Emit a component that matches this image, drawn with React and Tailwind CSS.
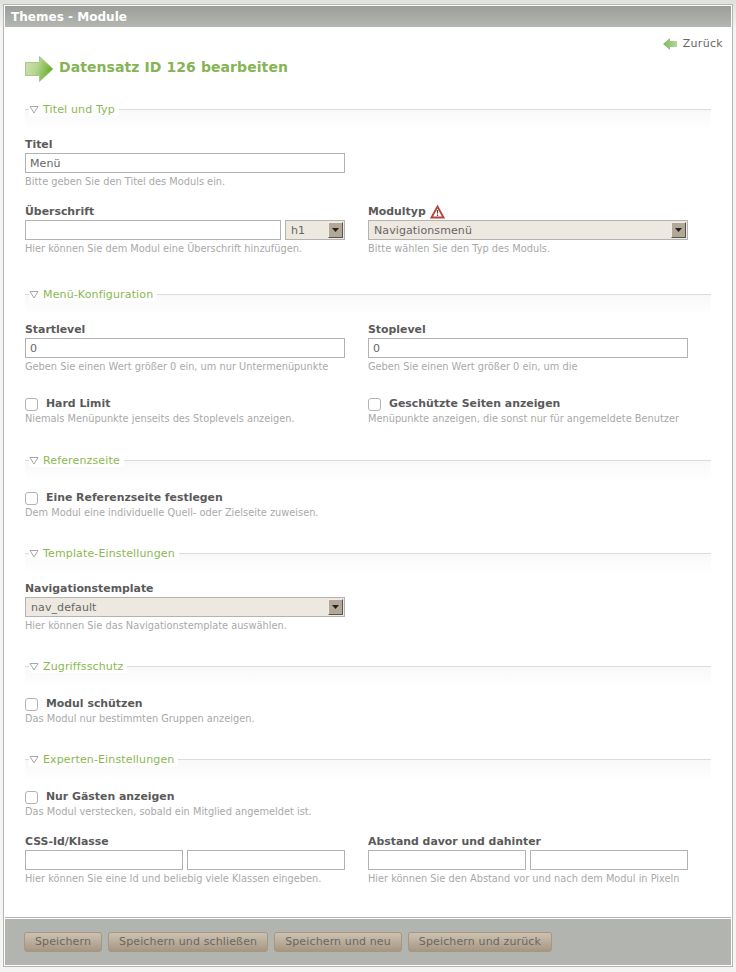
import React from "react";

const Legend = ({ title }) => (
  <div className="relative h-[29px]">
    <div className="absolute left-0 right-0 top-0 h-px bg-[#dcdcdc]" />
    <div className="h-[21px] bg-gradient-to-b from-[#f8f8f8] to-white" />
    <div className="absolute left-[4px] top-[-6px] flex h-[13px] items-center bg-white pr-[4px] text-[11px] leading-[13px] tracking-[0.14px] text-[#8ab84f]">
      <svg width="10" height="9" viewBox="0 0 10 9" className="mr-[4px]">
        <path d="M1 1.5 H9 L5 8 Z" fill="none" stroke="#a8a8a8" strokeWidth="1" />
      </svg>
      {title}
    </div>
  </div>
);

const Label = ({ children }) => (
  <div className="flex h-[15px] items-center gap-[4px] pb-[2px] text-[10.9px] font-bold leading-[13px] text-[#5a5a5a]">
    {children}
  </div>
);

const Hint = ({ children, className = "mt-[3px]" }) => (
  <div className={`h-[12px] whitespace-nowrap text-[9.8px] leading-[12px] text-[#a9a9a9] ${className}`}>
    {children}
  </div>
);

const Input = ({ value, className = "" }) => (
  <input
    readOnly
    value={value || ""}
    className={`block h-[20px] border border-[#b3b3b3] bg-white px-[4px] text-[11px] tracking-[0.1px] text-[#666] outline-none ${className}`}
  />
);

const Select = ({ value, className = "" }) => (
  <div
    className={`flex h-[20px] items-center justify-between border border-[#b3b3b3] bg-[#ede8e0] pl-[5px] pr-px text-[11px] tracking-[0.1px] text-[#666] ${className}`}
  >
    <span className="pt-[2px]">{value}</span>
    <div className="flex h-[16px] w-[15px] items-center justify-center border-t border-l border-t-[#f0ede6] border-l-[#f0ede6] border-r border-b border-r-[#555] border-b-[#555] bg-[#b3a898]">
      <svg width="7" height="4" viewBox="0 0 7 4">
        <path d="M0 0 H7 L3.5 4 Z" fill="#222" />
      </svg>
    </div>
  </div>
);

const Check = ({ label, className = "" }) => (
  <div className={`flex h-[14px] items-center text-[10.9px] font-bold text-[#5a5a5a] ${className}`}>
    <div className="mr-[8px] h-[13px] w-[13px] rounded-[3px] border border-[#b3b3b3] bg-white" />
    {label}
  </div>
);

const Row = ({ children, className = "" }) => (
  <div className={`flex gap-[23px] ${className}`}>{children}</div>
);

const Col = ({ children }) => <div className="w-[320px]">{children}</div>;

const Button = ({ children }) => (
  <button className="h-[20px] rounded-[3px] border border-[#a8977f] bg-gradient-to-b from-[#cdc2b2] to-[#a69782] px-[10px] text-[11px] tracking-[0.13px] text-[#6a6762]">
    {children}
  </button>
);

const App = () => {
  return (
    <div className="h-[972px] w-[736px] bg-gradient-to-b from-[#dfe1dd] to-[#f4f4f3] to-[3%] pt-[4px] pl-[3px] font-['DejaVu_Sans',sans-serif]">
      <div className="h-[963px] w-[730px] border border-[#b5b5b5] bg-white p-px">
        <div className="flex h-[21px] items-center bg-gradient-to-b from-[#9c9e9a] to-[#b4b6b2] pl-[6px] text-[12px] font-bold tracking-[0.03px] text-white">
          Themes - Module
        </div>

        <div className="relative h-[891px] border-b border-[#b5b5b5] px-[20px]">
          <div className="absolute right-[8px] top-[9px] flex items-center text-[11px] tracking-[0.3px] text-[#666]">
            <svg width="14" height="12" viewBox="0 0 14 12" className="mr-[6px]">
              <defs>
                <linearGradient id="back" x1="0" y1="0" x2="1" y2="0">
                  <stop offset="0" stopColor="#7db85a" />
                  <stop offset="1" stopColor="#b4d89c" />
                </linearGradient>
              </defs>
              <path d="M0 6 L7 0 V3 H14 V9 H7 V12 Z" fill="url(#back)" />
            </svg>
            Zurück
          </div>

          <div className="flex items-center pt-[25px]">
            <svg width="29" height="26" viewBox="0 0 29 26" className="mr-[5px] mt-[4px] shrink-0">
              <defs>
                <linearGradient id="arrow" x1="0" y1="0" x2="1" y2="0.3">
                  <stop offset="0" stopColor="#cfe3b4" />
                  <stop offset="0.5" stopColor="#b5d690" />
                  <stop offset="1" stopColor="#6fae2e" />
                </linearGradient>
              </defs>
              <path d="M0.5 6.5 H14.5 V0.5 L28 13 L14.5 25.5 V19.5 H0.5 Z" fill="url(#arrow)" stroke="#a6c98a" />
            </svg>
            <h1 className="text-[14px] font-bold tracking-[0.08px] text-[#85b455]">
              Datensatz ID 126 bearbeiten
            </h1>
          </div>

          <div className="mt-[27px] w-[686px]">
            <Legend title="Titel und Typ" />
            <Label>Titel</Label>
            <Input value="Menü" className="w-[320px]" />
            <Hint>Bitte geben Sie den Titel des Moduls ein.</Hint>

            <Row className="mt-[17px]">
              <Col>
                <Label>Überschrift</Label>
                <div className="flex gap-[4px]">
                  <Input className="w-[256px]" />
                  <Select value="h1" className="w-[60px]" />
                </div>
                <Hint>Hier können Sie dem Modul eine Überschrift hinzufügen.</Hint>
              </Col>
              <Col>
                <Label>
                  Modultyp
                  <svg width="15" height="14" viewBox="0 0 15 14">
                    <path d="M7.5 1.5 L13.5 12.5 H1.5 Z" fill="#fff" stroke="#b8433a" strokeWidth="1.8" />
                    <path d="M7.5 5 V8.5 M7.5 9.5 V11" stroke="#444" strokeWidth="1.2" />
                  </svg>
                </Label>
                <Select value="Navigationsmenü" />
                <Hint>Bitte wählen Sie den Typ des Moduls.</Hint>
              </Col>
            </Row>

            <div className="mt-[39px]">
              <Legend title="Menü-Konfiguration" />
            </div>
            <Row>
              <Col>
                <Label>Startlevel</Label>
                <Input value="0" className="w-[320px]" />
                <Hint>Geben Sie einen Wert größer 0 ein, um nur Untermenüpunkte</Hint>
              </Col>
              <Col>
                <Label>Stoplevel</Label>
                <Input value="0" className="w-[320px]" />
                <Hint>Geben Sie einen Wert größer 0 ein, um die</Hint>
              </Col>
            </Row>
            <Row className="mt-[24px]">
              <Col>
                <Check label="Hard Limit" />
                <Hint className="mt-[2px]">Niemals Menüpunkte jenseits des Stoplevels anzeigen.</Hint>
              </Col>
              <Col>
                <Check label="Geschützte Seiten anzeigen" />
                <Hint className="mt-[2px]">Menüpunkte anzeigen, die sonst nur für angemeldete Benutzer</Hint>
              </Col>
            </Row>

            <div className="mt-[35px]">
              <Legend title="Referenzseite" />
            </div>
            <Check label="Eine Referenzseite festlegen" className="mt-[2px]" />
            <Hint className="mt-[2px]">Dem Modul eine individuelle Quell- oder Zielseite zuweisen.</Hint>

            <div className="mt-[34px]">
              <Legend title="Template-Einstellungen" />
            </div>
            <Label>Navigationstemplate</Label>
            <Select value="nav_default" className="w-[320px]" />
            <Hint>Hier können Sie das Navigationstemplate auswählen.</Hint>

            <div className="mt-[34px]">
              <Legend title="Zugriffsschutz" />
            </div>
            <Check label="Modul schützen" className="mt-[2px]" />
            <Hint className="mt-[2px]">Das Modul nur bestimmten Gruppen anzeigen.</Hint>

            <div className="mt-[34px]">
              <Legend title="Experten-Einstellungen" />
            </div>
            <Check label="Nur Gästen anzeigen" className="mt-[2px]" />
            <Hint className="mt-[2px]">Das Modul verstecken, sobald ein Mitglied angemeldet ist.</Hint>

            <Row className="mt-[17px]">
              <Col>
                <Label>CSS-Id/Klasse</Label>
                <div className="flex gap-[4px]">
                  <Input className="w-[158px]" />
                  <Input className="w-[158px]" />
                </div>
                <Hint>Hier können Sie eine Id und beliebig viele Klassen eingeben.</Hint>
              </Col>
              <Col>
                <Label>Abstand davor und dahinter</Label>
                <div className="flex gap-[4px]">
                  <Input className="w-[158px]" />
                  <Input className="w-[158px]" />
                </div>
                <Hint>Hier können Sie den Abstand vor und nach dem Modul in Pixeln</Hint>
              </Col>
            </Row>
          </div>
        </div>

        <div className="mt-px flex h-[46px] items-center gap-[6px] bg-[#b2b4b0] pl-[19px]">
          <Button>Speichern</Button>
          <Button>Speichern und schließen</Button>
          <Button>Speichern und neu</Button>
          <Button>Speichern und zurück</Button>
        </div>
      </div>
    </div>
  );
};

export default App;
